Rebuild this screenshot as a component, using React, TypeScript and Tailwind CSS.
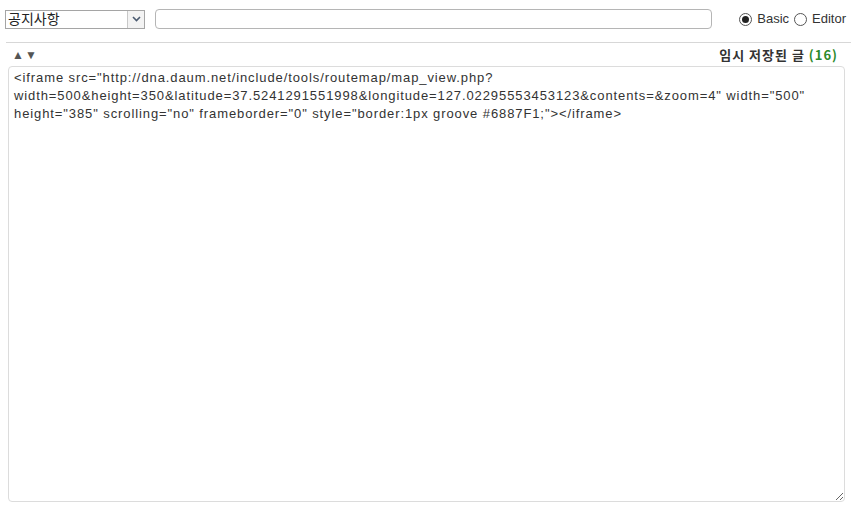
import React from 'react';

const content =
  '<iframe src="http://dna.daum.net/include/tools/routemap/map_view.php?width=500&height=350&latitude=37.5241291551998&longitude=127.02295553453123&contents=&zoom=4" width="500" height="385" scrolling="no" frameborder="0" style="border:1px groove #6887F1;"></iframe>';

function Radio({ checked }: { checked?: boolean }) {
  return (
    <span className="w-[13px] h-[13px] rounded-full border border-[#555] bg-white flex items-center justify-center">
      {checked && <span className="w-[7px] h-[7px] rounded-full bg-[#222]" />}
    </span>
  );
}

export default function App() {
  return (
    <div
      className="w-[851px] h-[508px] bg-white text-[#333] overflow-hidden"
      style={{ fontFamily: '"Liberation Sans", "Noto Sans CJK KR", sans-serif' }}
    >
      {/* Top bar */}
      <div className="flex items-center h-[42px] pl-[5px] pr-[5px] pb-[4px]">
        <div className="w-[140px] h-[19px] border border-[#a5a5a5] flex items-center">
          <span className="flex-1 pl-[2px] text-[14px] leading-none text-[#222]">공지사항</span>
          <span className="w-[17px] h-[17px] border-l border-[#c8c8c8] bg-[#f3f3f3] flex items-center justify-center">
            <svg width="9" height="6" viewBox="0 0 9 6">
              <path d="M1 1 L4.5 4.5 L8 1" fill="none" stroke="#4a5a70" strokeWidth="1.6" />
            </svg>
          </span>
        </div>
        <div className="ml-[10px] w-[557px] h-[20px] border border-[#b5b5b5] rounded-[4px]" />
        <div className="ml-auto flex items-center text-[13px] text-[#333]">
          <Radio checked />
          <span className="ml-[5px]">Basic</span>
          <span className="ml-[5px]"><Radio /></span>
          <span className="ml-[5px]">Editor</span>
        </div>
      </div>

      <div className="ml-[6px] border-t border-[#d7d7d7]" />

      {/* Sub header */}
      <div className="flex items-center h-[23px] pl-[12px] pr-[13px] pt-[1px]">
        <span className="text-[12px] text-[#555] tracking-[1px]">▲▼</span>
        <span
          className="ml-auto text-[13px] font-bold text-[#333] tracking-[1px]"
          style={{ fontFamily: '"Noto Sans CJK KR", sans-serif' }}
        >
          임시 저장된 글 <span className="text-[#2b8a2b]">(16)</span>
        </span>
      </div>

      {/* Text area */}
      <div className="pl-[8px] pr-[6px]">
        <textarea
          className="block w-[837px] h-[436px] border border-[#dcdcdc] rounded-[4px] px-[5px] pt-[2px] text-[13px] leading-[18px] tracking-[0.9px] text-[#333] outline-none"
          style={{ fontFamily: '"Liberation Sans", "Noto Sans CJK KR", sans-serif' }}
          defaultValue={content}
        />
      </div>
    </div>
  );
}
